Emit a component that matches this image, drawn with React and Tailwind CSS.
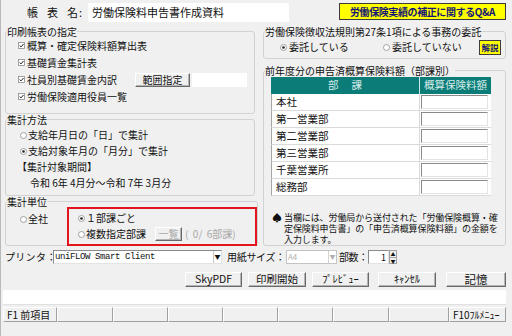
import React from "react"

const Radio = ({ on }) => (
  <svg width="7" height="7" viewBox="0 0 7 7" className="shrink-0">
    <circle cx="3.5" cy="3.5" r="3" fill="#fff" stroke="#8c8c8c" strokeWidth="0.8" />
    {on && <circle cx="3.5" cy="3.5" r="1.3" fill="#222" />}
  </svg>
)

const Check = () => (
  <svg width="7" height="7" viewBox="0 0 7 7" className="shrink-0">
    <rect x="0.5" y="0.5" width="6" height="6" fill="#fff" stroke="#8c8c8c" strokeWidth="0.8" />
    <path d="M1.6 3.5 L3 4.9 L5.5 2" fill="none" stroke="#222" strokeWidth="1" />
  </svg>
)

const Group = ({ title, className, children }) => (
  <fieldset className={`border border-[#d2d2d2] rounded-[3px] ${className}`}>
    <legend className="ml-[1px] text-[10px] leading-[11px] whitespace-nowrap">{title}</legend>
    {children}
  </fieldset>
)

const Btn = ({ className, children }) => (
  <div
    className={`flex items-center justify-center whitespace-nowrap bg-[#f0f0f0] border border-t-white border-l-white border-r-[#696969] border-b-[#696969] shadow-[inset_-1px_-1px_0_#b4b4b4] ${className}`}
  >
    {children}
  </div>
)

const sunken = "bg-white border border-t-[#8a8a8a] border-l-[#8a8a8a] border-r-[#e3e3e3] border-b-[#e3e3e3]"

const depts = ["本社", "第一営業部", "第二営業部", "第三営業部", "千葉営業所", "総務部"]

const fkeys = [
  { w: "w-[54px]", t: "F1 前項目" },
  { w: "w-[56px]", t: "" },
  { w: "w-[55px]", t: "" },
  { w: "w-[55px]", t: "" },
  { w: "w-[55px]", t: "" },
  { w: "w-[55px]", t: "" },
  { w: "w-[56px]", t: "" },
  { w: "w-[60px]", t: "" },
  { w: "w-[57px]", t: "F10ﾌﾙﾒﾆｭｰ" },
]

export default function App() {
  return (
    <div className="w-[512px] h-[336px] overflow-hidden bg-[#f0f0f0] text-[#111] border-l border-[#b9b9b9] font-['Noto_Sans_CJK_JP',sans-serif] flex flex-col">
      {/* title row */}
      <div className="mt-[3px] h-[19px] flex items-start">
        <div className="w-[87px] h-[19px] flex items-center pl-[26px] text-[11px] leading-none">
          <span>帳</span>
          <span className="ml-[9px]">表</span>
          <span className="ml-[9px]">名</span>
          <span className="ml-[1px]">:</span>
        </div>
        <div className="w-[201px] h-[19px] bg-white flex items-center pl-[4px] text-[11px] leading-none">
          労働保険料申告書作成資料
        </div>
        <div className="ml-[50px] w-[167px] h-[17px] bg-[#ffff00] border border-[#3c3c3c] flex items-center justify-center text-[10px] font-bold tracking-[-0.4px] text-[#141478] leading-none whitespace-nowrap">
          労働保険実績の補正に関するQ&amp;A
        </div>
      </div>

      {/* main */}
      <div className="mt-[4px] h-[220px] flex">
        <div className="ml-[4px] w-[250px] flex flex-col">
          <Group title="印刷帳表の指定" className="h-[88px]">
            {["概算・確定保険料額算出表", "基礎賃金集計表"].map((t) => (
              <div key={t} className="h-[17px] flex items-center pl-[12px] gap-[2px] text-[10px] leading-none">
                <Check />
                <span>{t}</span>
              </div>
            ))}
            <div className="h-[17px] flex items-center pl-[12px] text-[10px] leading-none">
              <Check />
              <span className="ml-[2px] w-[108px]">社員別基礎賃金内訳</span>
              <Btn className="w-[55px] h-[14px] text-[10px]">範囲指定</Btn>
              <div className="ml-[2px] w-[55px] h-[14px] bg-white" />
            </div>
            <div className="h-[17px] flex items-center pl-[12px] gap-[2px] text-[10px] leading-none">
              <Check />
              <span>労働保険適用役員一覧</span>
            </div>
          </Group>

          <Group title="集計方法" className="h-[82px]">
            <div className="pt-[2px] text-[10px] leading-none">
              <div className="h-[16px] flex items-center pl-[14px] gap-[1px]">
                <Radio />
                <span>支給年月日の「日」で集計</span>
              </div>
              <div className="h-[16px] flex items-center pl-[14px] gap-[1px]">
                <Radio on />
                <span>支給対象年月の「月分」で集計</span>
              </div>
              <div className="h-[16px] flex items-center pl-[11px]">【集計対象期間】</div>
              <div className="h-[16px] flex items-center pl-[24px] whitespace-pre">令和 6年 4月分～令和 7年 3月分</div>
            </div>
          </Group>

          <Group title="集計単位" className="h-[50px]">
            <div className="flex text-[10px] leading-none">
              <div className="w-[61px] shrink-0">
                <div className="mt-[4px] h-[16px] flex items-center pl-[14px] gap-[1px]">
                  <Radio />
                  <span>全社</span>
                </div>
              </div>
              <div className="w-[190px] h-[39px] shrink-0 border-2 border-[#e3141d] pt-[1px]">
                <div className="h-[16px] flex items-center pl-[9px] gap-[1px]">
                  <Radio on />
                  <span className="whitespace-pre">１部課ごと</span>
                </div>
                <div className="h-[16px] flex items-center pl-[9px]">
                  <Radio />
                  <span className="ml-[1px] w-[69px]">複数指定部課</span>
                  <Btn className="w-[27px] h-[14px] text-[#a8a8a8]">一覧</Btn>
                  <span className="ml-[3px] text-[#a8a8a8] whitespace-pre">(  0/  6部課)</span>
                </div>
              </div>
            </div>
          </Group>
        </div>

        <div className="ml-[8px] w-[243px] flex flex-col">
          <Group title="労働保険徴収法規則第27条1項による事務の委託" className="h-[33px]">
            <div className="h-[20px] flex items-center pl-[16px] text-[10px] leading-none">
              <div className="w-[103px] flex items-center gap-[2px]">
                <Radio on />
                <span>委託している</span>
              </div>
              <div className="flex items-center gap-[2px]">
                <Radio />
                <span>委託していない</span>
              </div>
              <div className="ml-auto mr-[4px] w-[22px] h-[15px] bg-[#ffff00] border border-[#3c3c3c] flex items-center justify-center text-[8.5px] font-bold text-[#141478]">
                解説
              </div>
            </div>
          </Group>

          <Group title="前年度分の申告済概算保険料額（部課別）" className="mt-[6px] h-[181px]">
            <div className="ml-[7px] mt-[1px] w-[220px] text-[10.5px] leading-none">
              <div className="h-[17px] flex bg-[#0b7c77] text-[#d6ecea]">
                <div className="w-[148px] flex items-center justify-center whitespace-pre">部　 課</div>
                <div className="w-[72px] border-l border-[#cfe6e4] flex items-center justify-center">概算保険料額</div>
              </div>
              {depts.map((d) => (
                <div key={d} className="h-[17px] flex bg-white border-l border-[#a6a6a6] border-b border-b-[#dadada]">
                  <div className="w-[147px] flex items-center pl-[4px]">{d}</div>
                  <div className="w-[72px] border-l border-[#dadada] flex items-center pl-[1px]">
                    <div className={`w-[67px] h-[14px] ${sunken}`} />
                  </div>
                </div>
              ))}
            </div>
            <div className="mt-[16px] ml-[8px] flex text-[9px] leading-[11px] whitespace-nowrap">
              <span className="w-[12px] text-[10px]">♠</span>
              <div className="tracking-[-0.1px]">
                当欄には、労働局から送付された「労働保険概算・確
                <br />
                定保険料申告書」の「申告済概算保険料額」の金額を
                <br />
                入力します。
              </div>
            </div>
          </Group>
        </div>
      </div>

      {/* printer row */}
      <div className="mt-[4px] h-[14px] flex items-center text-[10px] leading-none">
        <span className="ml-[4px] w-[48px] whitespace-nowrap tracking-[0.3px]">プリンタ：</span>
        <div className={`w-[169px] h-[14px] flex items-center ${sunken}`}>
          <span className="flex-1 pl-[1px] font-['Liberation_Mono',monospace] text-[9px] tracking-[-0.4px]">uniFLOW Smart Client</span>
          <div className="w-[8px] h-[12px] border-l border-[#c8c8c8] flex items-center justify-center text-[6px]">▼</div>
        </div>
        <span className="ml-[5px] w-[59px] whitespace-nowrap tracking-[-0.3px]">用紙サイズ：</span>
        <div className="w-[51px] h-[14px] flex items-center bg-white border border-[#c4c4c4]">
          <span className="flex-1 pl-[1px] text-[8px] text-[#b0b0b0]">A4</span>
          <div className="w-[8px] h-[12px] border-l border-[#d4d4d4] flex items-center justify-center text-[6px] text-[#b0b0b0]">▼</div>
        </div>
        <span className="ml-[2px] w-[29px] whitespace-nowrap tracking-[-0.4px]">部数：</span>
        <div className={`w-[21px] h-[14px] flex items-center justify-end pr-[2px] text-[9px] ${sunken}`}>1</div>
        <div className="w-[8px] h-[14px] flex flex-col border border-[#a0a0a0] bg-[#f0f0f0] text-[5px] leading-none">
          <div className="flex-1 flex items-center justify-center border-b border-[#a0a0a0]">▲</div>
          <div className="flex-1 flex items-center justify-center">▼</div>
        </div>
      </div>

      {/* buttons */}
      <div className="mt-[8px] h-[15px] flex text-[10.5px] leading-none">
        <Btn className="ml-[184px] w-[57px]">SkyPDF</Btn>
        <Btn className="ml-[6px] w-[58px]">印刷開始</Btn>
        <Btn className="ml-[6px] w-[57px]">ﾌﾟﾚﾋﾞｭｰ</Btn>
        <Btn className="ml-[9px] w-[58px]">ｷｬﾝｾﾙ</Btn>
        <Btn className="ml-[10px] w-[60px] text-[11.5px]">記憶</Btn>
      </div>

      <div className="mt-[3px] ml-[2px] w-[503px] h-[15px] bg-white border-b border-[#e0e0e0]" />

      <div className="mt-[2px] ml-[2px] h-[15px] flex text-[10px] leading-none">
        {fkeys.map((k, i) => (
          <div
            key={i}
            className={`${k.w} h-[15px] flex items-center pl-[3px] whitespace-nowrap border border-t-white border-l-white border-r-[#a0a0a0] border-b-[#a0a0a0]`}
          >
            {k.t}
          </div>
        ))}
      </div>
    </div>
  )
}
